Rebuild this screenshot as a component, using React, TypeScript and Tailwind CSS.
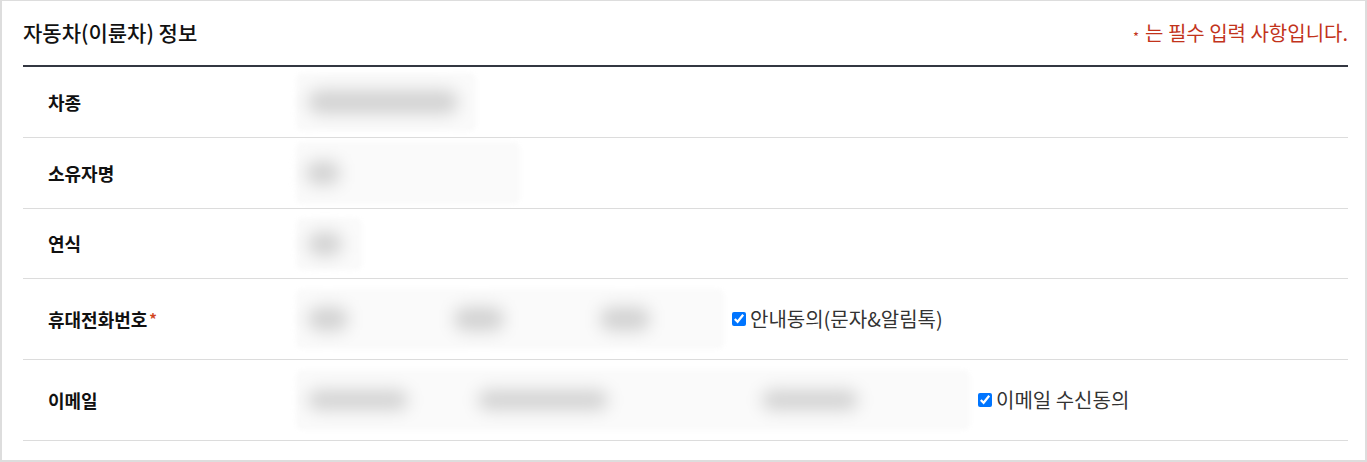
const font = { fontFamily: '"Noto Sans CJK KR", "Noto Sans", sans-serif' };

type Blob = { w: number; ml: number };

const Redacted = ({ w, h, blobs, blobH = 24 }: { w: number; h: number; blobs: Blob[]; blobH?: number }) => (
  <div className="flex items-center rounded-md bg-[#fafafa] blur-[2px]" style={{ width: w, height: h }}>
    {blobs.map((b, i) => (
      <span
        key={i}
        className="block shrink-0 rounded-full bg-[#d2d2d2] blur-[8px]"
        style={{ width: b.w, marginLeft: b.ml, height: blobH }}
      />
    ))}
  </div>
);

const Check = ({ label }: { label: string }) => (
  <label className="ml-[8px] flex items-center gap-[4px] text-[20px] leading-none text-[#333]">
    <input type="checkbox" defaultChecked className="h-[14px] w-[14px] accent-[#0075ff]" />
    {label}
  </label>
);

const Row = ({ label, required, height, children }: { label: string; required?: boolean; height: number; children: React.ReactNode }) => (
  <div className="flex items-center border-b border-[#dcdcdc]" style={{ height }}>
    <div className="flex w-[273px] shrink-0 items-center pl-[25px] text-[18px] font-semibold text-[#111]">
      {label}
      {required && <span className="ml-[2px] text-[15px] text-[#d2461e]">*</span>}
    </div>
    <div className="flex items-center">{children}</div>
  </div>
);

export default function App() {
  return (
    <div style={font} className="h-[462px] w-[1367px] border-2 border-t border-[#dddddd] bg-white pl-[21px] pr-[17px]">
      <div className="flex h-[66px] items-center justify-between border-b-2 border-[#333741]">
        <h2 className="text-[21px] font-medium text-[#111]">자동차(이륜차) 정보</h2>
        <p className="flex items-center text-[20px] text-[#c2331b]">
          <span className="relative top-[4px] mr-[6px] text-[13px] text-[#c2331b]">*</span>는 필수 입력 사항입니다.
        </p>
      </div>
      <Row label="차종" height={71}>
        <Redacted w={180} h={58} blobs={[{ w: 150, ml: 12 }]} />
      </Row>
      <Row label="소유자명" height={71}>
        <Redacted w={224} h={62} blobs={[{ w: 34, ml: 10 }]} />
      </Row>
      <Row label="연식" height={70}>
        <Redacted w={66} h={52} blobs={[{ w: 34, ml: 12 }]} />
      </Row>
      <Row label="휴대전화번호" required height={81}>
        <Redacted w={428} h={60} blobs={[{ w: 40, ml: 12 }, { w: 50, ml: 106 }, { w: 50, ml: 96 }]} />
        <Check label="안내동의(문자&알림톡)" />
      </Row>
      <Row label="이메일" height={81}>
        <Redacted w={674} h={60} blobs={[{ w: 100, ml: 12 }, { w: 130, ml: 70 }, { w: 96, ml: 154 }]} blobH={20} />
        <Check label="이메일 수신동의" />
      </Row>
    </div>
  );
}
